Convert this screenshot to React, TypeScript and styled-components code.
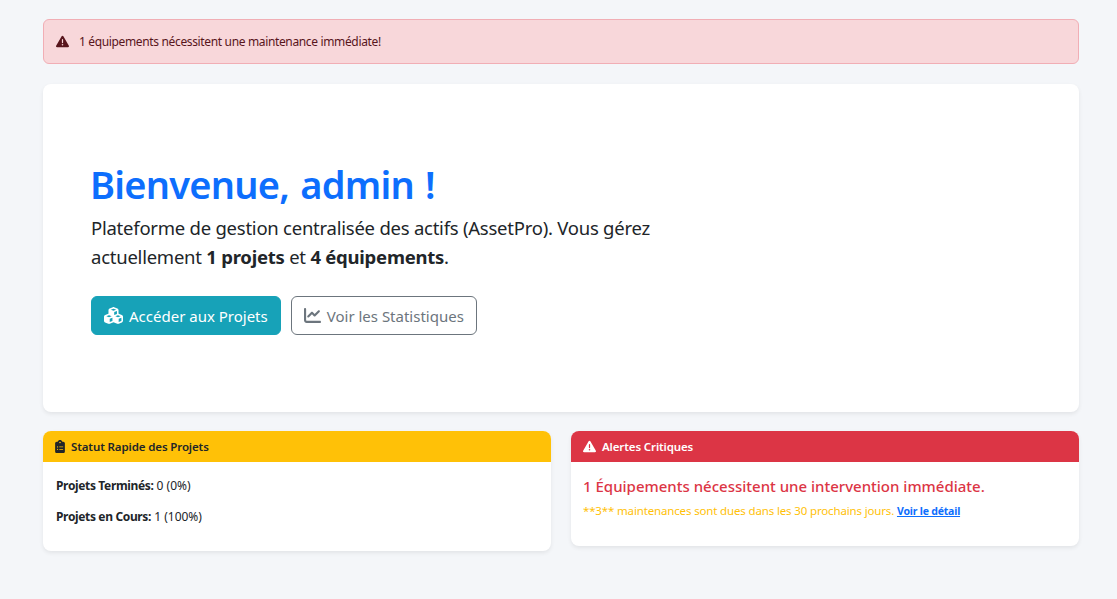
import styled, { createGlobalStyle } from 'styled-components';
import {
  FaChartLine,
  FaClipboardList,
  FaCubes,
  FaTriangleExclamation,
} from 'react-icons/fa6';

const GlobalStyle = createGlobalStyle`
  html, body {
    margin: 0;
    background: #f4f6f9;
    color: #212529;
    font-family: "Noto Sans", "Open Sans", sans-serif;
  }
  * { box-sizing: border-box; }
`;

const Page = styled.main`
  display: flex;
  flex-direction: column;
  min-height: 599px;
  padding: 19px 38px 0 43px;
`;

const AlertBar = styled.div`
  display: flex;
  align-items: center;
  gap: 10px;
  height: 45px;
  padding: 0 12px;
  margin-bottom: 20px;
  background: #f8d7da;
  border: 1px solid #f1aeb5;
  border-radius: 6px;
  color: #58151c;
  font-size: 12px;
  letter-spacing: -0.35px;
`;

const Hero = styled.section`
  height: 328px;
  padding: 77px 48px 0;
  margin-bottom: 19px;
  background: #fff;
  border-radius: 8px;
  box-shadow: 0 2px 4px rgba(0, 0, 0, 0.075);
`;

const Title = styled.h1`
  margin: 0 0 6px -1px;
  color: #0d6efd;
  font-size: 38px;
  font-weight: 600;
  line-height: 46px;
  letter-spacing: -0.75px;
  word-spacing: 2px;
`;

const Lead = styled.p`
  width: 600px;
  margin: 0 0 25px;
  font-size: 18.5px;
  line-height: 29px;
  letter-spacing: -0.24px;

  strong {
    font-weight: 700;
  }
`;

const Actions = styled.div`
  display: flex;
  gap: 10px;
`;

const ActionButton = styled.a<{ $outline?: boolean }>`
  display: inline-flex;
  align-items: center;
  gap: 6px;
  height: 39px;
  padding: 0 12px;
  border: 1px solid ${(p) => (p.$outline ? '#6c757d' : '#17a2b8')};
  border-radius: 6px;
  background: ${(p) => (p.$outline ? '#fff' : '#17a2b8')};
  color: ${(p) => (p.$outline ? '#6c757d' : '#fff')};
  font-size: 15px;
`;

const CardRow = styled.div`
  display: grid;
  grid-template-columns: 1fr 1fr;
  gap: 20px;
  align-items: start;
`;

const Card = styled.article<{ $height: number }>`
  height: ${(p) => p.$height}px;
  overflow: hidden;
  background: #fff;
  border-radius: 8px;
  box-shadow: 0 2px 4px rgba(0, 0, 0, 0.075);
`;

const CardHeader = styled.header<{ $tone: 'warning' | 'danger' }>`
  display: flex;
  align-items: center;
  gap: 6px;
  height: 31px;
  padding: 0 12px;
  background: ${(p) => (p.$tone === 'warning' ? '#ffc107' : '#dc3545')};
  color: ${(p) => (p.$tone === 'warning' ? '#212529' : '#fff')};
  font-size: 11.5px;
  font-weight: 600;
  letter-spacing: -0.12px;
`;

const ClipboardIcon = styled(FaClipboardList)`
  width: 10px;
  height: 13px;
`;

const CardBody = styled.div`
  padding: 15px 13px 14px 13px;
`;

const AlertBody = styled.div`
  padding: 14px 12px;
`;

const StatLine = styled.p`
  margin: 0 0 14px;
  font-size: 12px;
  line-height: 17px;

  strong {
    font-weight: 700;
    letter-spacing: -0.35px;
  }
`;

const CriticalTitle = styled.h5`
  margin: 0 0 6px;
  color: #dc3545;
  font-size: 15px;
  font-weight: 500;
  line-height: 20px;
`;

const DueNote = styled.p`
  margin: 0;
  color: #ffc107;
  font-size: 11.5px;
  line-height: 17px;
  letter-spacing: -0.15px;

  a {
    color: #0d6efd;
    font-size: 10.5px;
    font-weight: 700;
    letter-spacing: -0.2px;
    text-decoration: underline;
  }
`;

export default function App() {
  return (
    <>
      <GlobalStyle />
      <Page>
        <AlertBar>
          <FaTriangleExclamation size={13} />
          <span>1 équipements nécessitent une maintenance immédiate!</span>
        </AlertBar>

        <Hero>
          <Title>Bienvenue, admin !</Title>
          <Lead>
            Plateforme de gestion centralisée des actifs (AssetPro). Vous gérez
            actuellement <strong>1 projets</strong> et{' '}
            <strong>4 équipements</strong>.
          </Lead>
          <Actions>
            <ActionButton>
              <FaCubes size={19} />
              Accéder aux Projets
            </ActionButton>
            <ActionButton $outline>
              <FaChartLine size={17} />
              Voir les Statistiques
            </ActionButton>
          </Actions>
        </Hero>

        <CardRow>
          <Card $height={120}>
            <CardHeader $tone="warning">
              <ClipboardIcon />
              Statut Rapide des Projets
            </CardHeader>
            <CardBody>
              <StatLine>
                <strong>Projets Terminés:</strong> 0 (0%)
              </StatLine>
              <StatLine>
                <strong>Projets en Cours:</strong> 1 (100%)
              </StatLine>
            </CardBody>
          </Card>
          <Card $height={115}>
            <CardHeader $tone="danger">
              <FaTriangleExclamation size={13} />
              Alertes Critiques
            </CardHeader>
            <AlertBody>
              <CriticalTitle>
                1 Équipements nécessitent une intervention immédiate.
              </CriticalTitle>
              <DueNote>
                **3** maintenances sont dues dans les 30 prochains jours.{' '}
                <a href="#detail">Voir le détail</a>
              </DueNote>
            </AlertBody>
          </Card>
        </CardRow>
      </Page>
    </>
  );
}
